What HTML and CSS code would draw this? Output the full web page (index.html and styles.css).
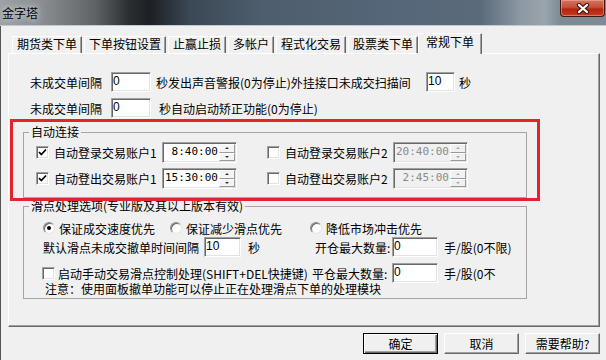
FILE: index.html
```html
<!DOCTYPE html>
<html>
<head>
    <title>金字塔</title>
    <link rel="stylesheet" href="styles.css">
</head>
<body>
<div class="window">
    <div class="titlebar">
        <span class="title">金字塔</span>
        <div class="close">
            <svg width="14" height="11" viewBox="0 0 14 11">
                <path d="M3 2 L11 9 M11 2 L3 9" stroke="#4a1c14" stroke-width="4.4" stroke-linecap="round"/>
                <path d="M3 2 L11 9 M11 2 L3 9" stroke="#fff" stroke-width="2.2" stroke-linecap="round"/>
            </svg>
        </div>
    </div>

    <div class="client">
        <div class="tabs">
            <div class="tab">期货类下单</div>
            <div class="tab">下单按钮设置</div>
            <div class="tab">止赢止损</div>
            <div class="tab">多帐户</div>
            <div class="tab">程式化交易</div>
            <div class="tab">股票类下单</div>
            <div class="tab active">常规下单</div>
        </div>

        <div class="panel">
            <div class="row row-first">
                <span class="lbl-interval">未成交单间隔</span>
                <input class="edit edit-40" value="0" readonly>
                <span class="lbl-alarm">秒发出声音警报(0为停止)外挂接口未成交扫描间</span>
                <input class="edit edit-29" value="10" readonly>
                <span class="lbl-sec">秒</span>
            </div>
            <div class="row">
                <span class="lbl-interval">未成交单间隔</span>
                <input class="edit edit-40" value="0" readonly>
                <span class="lbl-fix">秒自动启动矫正功能(0为停止)</span>
            </div>

            <!-- red marker round the auto connect group -->
            <div class="highlight">
                <fieldset class="group group-conn">
                    <legend>自动连接</legend>
                    <div class="conn-body">
                        <div class="conn-row">
                            <div class="conn-cell">
                                <span class="cb"><svg width="9" height="9" viewBox="0 0 9 9"><path d="M1 4 L3.3 6.5 L8 1.5" fill="none" stroke="#000" stroke-width="1.7"/></svg></span>
                                <span class="conn-label">自动登录交易账户1</span>
                                <div class="spinner">
                                    <span class="spin-text"> 8:40:00</span>
                                    <div class="spin"><span class="up"></span><span class="down"></span></div>
                                </div>
                            </div>
                            <div class="conn-cell">
                                <span class="cb"></span>
                                <span class="conn-label">自动登录交易账户2</span>
                                <div class="spinner disabled">
                                    <span class="spin-text">20:40:00</span>
                                    <div class="spin"><span class="up"></span><span class="down"></span></div>
                                </div>
                            </div>
                        </div>
                        <div class="conn-row">
                            <div class="conn-cell">
                                <span class="cb"><svg width="9" height="9" viewBox="0 0 9 9"><path d="M1 4 L3.3 6.5 L8 1.5" fill="none" stroke="#000" stroke-width="1.7"/></svg></span>
                                <span class="conn-label">自动登出交易账户1</span>
                                <div class="spinner">
                                    <span class="spin-text">15:30:00</span>
                                    <div class="spin"><span class="up"></span><span class="down"></span></div>
                                </div>
                            </div>
                            <div class="conn-cell">
                                <span class="cb"></span>
                                <span class="conn-label">自动登出交易账户2</span>
                                <div class="spinner disabled">
                                    <span class="spin-text"> 2:45:00</span>
                                    <div class="spin"><span class="up"></span><span class="down"></span></div>
                                </div>
                            </div>
                        </div>
                    </div>
                </fieldset>
            </div>

            <fieldset class="group group-slip">
                <legend>滑点处理选项(专业版及其以上版本有效)</legend>
                <div class="slip-body">
                    <div class="radio-row">
                        <div class="radio-item item-1"><span class="radio checked"></span>保证成交速度优先</div>
                        <div class="radio-item item-2"><span class="radio"></span>保证减少滑点优先</div>
                        <div class="radio-item"><span class="radio"></span>降低市场冲击优先</div>
                    </div>
                    <div class="slip-row">
                        <div class="slip-left">
                            <span>默认滑点未成交撤单时间间隔</span>
                            <input class="edit edit-37" value="10" readonly>
                            <span class="lbl-sec2">秒</span>
                        </div>
                        <span class="qty-label">开仓最大数量:</span>
                        <input class="edit edit-46" value="0" readonly>
                        <span class="unit">手/股(0不限)</span>
                    </div>
                    <div class="slip-row row-manual">
                        <div class="slip-left left-manual">
                            <span class="cb"></span>
                            <span class="manual-label">启动手动交易滑点控制处理(SHIFT+DEL快捷键)</span>
                        </div>
                        <span class="qty-label qty-close">平仓最大数量:</span>
                        <input class="edit edit-46" value="0" readonly>
                        <span class="unit">手/股(0不</span>
                    </div>
                    <div class="note">注意：使用面板撤单功能可以停止正在处理滑点下单的处理模块</div>
                </div>
            </fieldset>
        </div>

        <div class="buttons">
            <button class="btn default">确定</button>
            <button class="btn">取消</button>
            <button class="btn">需要帮助?</button>
        </div>
    </div>
</div>
</body>
</html>
```

FILE: styles.css
```css
* {
    box-sizing: border-box;
}

body {
    margin: 0;
    background: #f0f0f0;
    color: #000;
    font-family: "Noto Sans CJK SC", sans-serif;
    font-size: 12px;
}

.window {
    width: 606px;
    height: 360px;
    overflow: hidden;
}

/* title bar */
.titlebar {
    height: 26px;
    display: flex;
    justify-content: space-between;
    align-items: flex-start;
    border-bottom: 1px solid #c3c9ce;
    background: linear-gradient(90deg, #9ca2a7 0, #8b8f93 40px, #606366 95px, #2a2d30 130px, #1d2024 150px, #3b4855 190px, #4d5d6d 260px, #56677a 400px, #5a6a7a 480px, #8c98a2 520px, #9aa4ac 545px, #7e8a94 560px);
}

.title {
    margin: 6px 0 0 2px;
    line-height: 14px;
    text-shadow: 0 0 5px #d4d8dc, 0 0 9px #c4c8cc;
}

.close {
    width: 45px;
    height: 17px;
    margin-right: 1px;
    display: flex;
    justify-content: center;
    align-items: center;
    border: 1px solid #45180f;
    border-top: none;
    border-radius: 0 0 4px 4px;
    background: linear-gradient(#d27561 0%, #c4503a 45%, #b3240f 58%, #c83c1f 100%);
    box-shadow: inset 0 0 0 1px rgba(255, 190, 175, 0.45);
}

/* client area */
.client {
    height: 334px;
    box-shadow: inset 1px 0 0 #555;
}

.tabs {
    display: flex;
    align-items: flex-end;
    height: 27px;
    padding-left: 12px;
}

.tab {
    height: 17px;
    padding: 0 4px;
    margin-right: 2px;
    line-height: 14px;
    white-space: nowrap;
    border-top: 1px solid #fff;
    border-left: 1px solid #fff;
    border-right: 1px solid #696969;
    box-shadow: inset -1px 0 0 #a0a0a0;
}

.tab.active {
    position: relative;
    z-index: 1;
    height: 21px;
    margin: 0 0 -1px -2px;
    padding: 0 7px;
    line-height: 15px;
    background: #f0f0f0;
}

.panel {
    width: 592px;
    height: 274px;
    margin-left: 8px;
    border: 1px solid;
    border-color: #fff #696969 #696969 #fff;
    box-shadow: inset -1px -1px 0 #a0a0a0;
}

.row {
    display: flex;
    align-items: center;
    height: 20px;
    padding-left: 21px;
    white-space: nowrap;
}

.row-first {
    margin-top: 18px;
}

.row + .row {
    margin-top: 6px;
}

.lbl-interval {
    width: 81px;
}

.lbl-alarm {
    width: 270px;
    margin-left: 5px;
}

.lbl-sec {
    margin-left: 4px;
}

.lbl-fix {
    margin-left: 8px;
}

/* edit boxes */
.edit {
    height: 20px;
    padding: 0 1px 2px 1px;
    font: 12px "Liberation Sans", sans-serif;
    color: #000;
    background: #fff;
    border: 1px solid;
    border-color: #a0a0a0 #fff #fff #a0a0a0;
    box-shadow: inset 1px 1px 0 #696969, inset -1px -1px 0 #e3e3e3;
    outline: none;
}

.edit-40 { width: 40px; }
.edit-29 { width: 29px; }
.edit-37 { width: 37px; }
.edit-46 { width: 46px; }

/* group boxes */
.group {
    margin: 0;
    padding: 0;
    min-width: 0;
    border: 1px solid #a4a4a4;
}

.group legend {
    margin-left: 5px;
    padding: 0 2px;
    line-height: 16px;
}

.highlight {
    position: relative;
    z-index: 2;
    width: 530px;
    margin: 1px 0 0 1px;
    border: 3px solid #e5232c;
}

.group-conn {
    width: 504px;
    margin: 2px 0 0 10px;
}

.conn-body {
    padding: 2px 0 8px 12px;
}

.conn-row {
    display: flex;
    align-items: center;
    height: 21px;
}

.conn-row + .conn-row {
    margin-top: 5px;
}

.conn-cell {
    display: flex;
    align-items: center;
    width: 231px;
    white-space: nowrap;
}

.conn-label {
    width: 108px;
    margin-left: 5px;
}

/* checkbox and radio */
.cb {
    width: 13px;
    height: 13px;
    flex: none;
    display: flex;
    align-items: center;
    justify-content: center;
    background: #fff;
    border: 1px solid;
    border-color: #a0a0a0 #fff #fff #a0a0a0;
    box-shadow: inset 1px 1px 0 #696969, inset -1px -1px 0 #e3e3e3;
}

.radio {
    position: relative;
    width: 12px;
    height: 12px;
    flex: none;
    margin-right: 4px;
    border-radius: 50%;
    border: 1px solid;
    border-color: #8c8c8c #e6e6e6 #e6e6e6 #8c8c8c;
    background: radial-gradient(circle at 60% 60%, #fff 40%, #e8e8e8 100%);
    box-shadow: inset 1px 1px 0 #6a6a6a;
}

.radio.checked::after {
    content: "";
    position: absolute;
    left: 3px;
    top: 3px;
    width: 4px;
    height: 4px;
    border-radius: 50%;
    background: #000;
}

/* time spinner */
.spinner {
    display: flex;
    width: 75px;
    height: 21px;
    background: #fff;
    border: 1px solid;
    border-color: #a0a0a0 #fff #fff #a0a0a0;
    box-shadow: inset 1px 1px 0 #696969, inset -1px -1px 0 #e3e3e3;
}

.spin-text {
    flex: 1;
    padding: 2px 0 0 2px;
    font: 11px "DejaVu Sans Mono", monospace;
    line-height: 14px;
    white-space: pre;
}

.spin {
    display: flex;
    flex-direction: column;
    width: 16px;
    margin: 1px 1px 1px 0;
}

.spin span {
    flex: 1;
    display: flex;
    align-items: center;
    justify-content: center;
    background: #f4f4f4;
    border: 1px solid;
    border-color: #fff #9a9a9a #9a9a9a #fff;
}

.spin .up::after,
.spin .down::after {
    content: "";
    border-left: 2px solid transparent;
    border-right: 2px solid transparent;
}

.spin .up::after {
    border-bottom: 2px solid #333;
}

.spin .down::after {
    border-top: 2px solid #333;
}

.spinner.disabled {
    background: #f0f0f0;
    color: #8a8a8a;
}

.spinner.disabled .spin span {
    background: #f0f0f0;
}

.spinner.disabled .spin .up::after {
    border-bottom-color: #a8a8a8;
}

.spinner.disabled .spin .down::after {
    border-top-color: #a8a8a8;
}

/* slippage group */
.group-slip {
    width: 504px;
    margin: -3px 0 0 14px;
}

.slip-body {
    padding: 5px 0 2px 19px;
    white-space: nowrap;
}

.radio-row {
    display: flex;
    align-items: center;
    height: 18px;
}

.radio-item {
    display: flex;
    align-items: center;
}

.item-1 { width: 127px; }
.item-2 { width: 140px; }

.slip-row {
    display: flex;
    align-items: center;
    height: 20px;
}

.row-manual {
    margin-top: 6px;
}

.slip-left {
    display: flex;
    align-items: center;
    width: 272px;
}

.left-manual {
    width: 270px;
    margin-left: -1px;
}

.slip-left .edit {
    margin-left: 5px;
}

.lbl-sec2 {
    margin-left: 7px;
}

.manual-label {
    margin-left: 3px;
}

.qty-label {
    width: 77px;
}

.qty-close {
    width: 80px;
}

.unit {
    margin-left: 6px;
}

.note {
    height: 14px;
    margin: -1px 0 0 2px;
    line-height: 14px;
}

/* bottom buttons */
.buttons {
    display: flex;
    justify-content: flex-end;
    gap: 6px;
    margin-top: 6px;
    padding-right: 6px;
}

.btn {
    width: 75px;
    height: 21px;
    padding: 0;
    font: inherit;
    color: #000;
    background: #f0f0f0;
    border: 1px solid;
    border-color: #fff #696969 #696969 #fff;
    box-shadow: inset -1px -1px 0 #a0a0a0;
}

.btn.default {
    border-color: #000;
    box-shadow: inset 1px 1px 0 #fff, inset -1px -1px 0 #696969, inset -2px -2px 0 #a0a0a0;
}
```
